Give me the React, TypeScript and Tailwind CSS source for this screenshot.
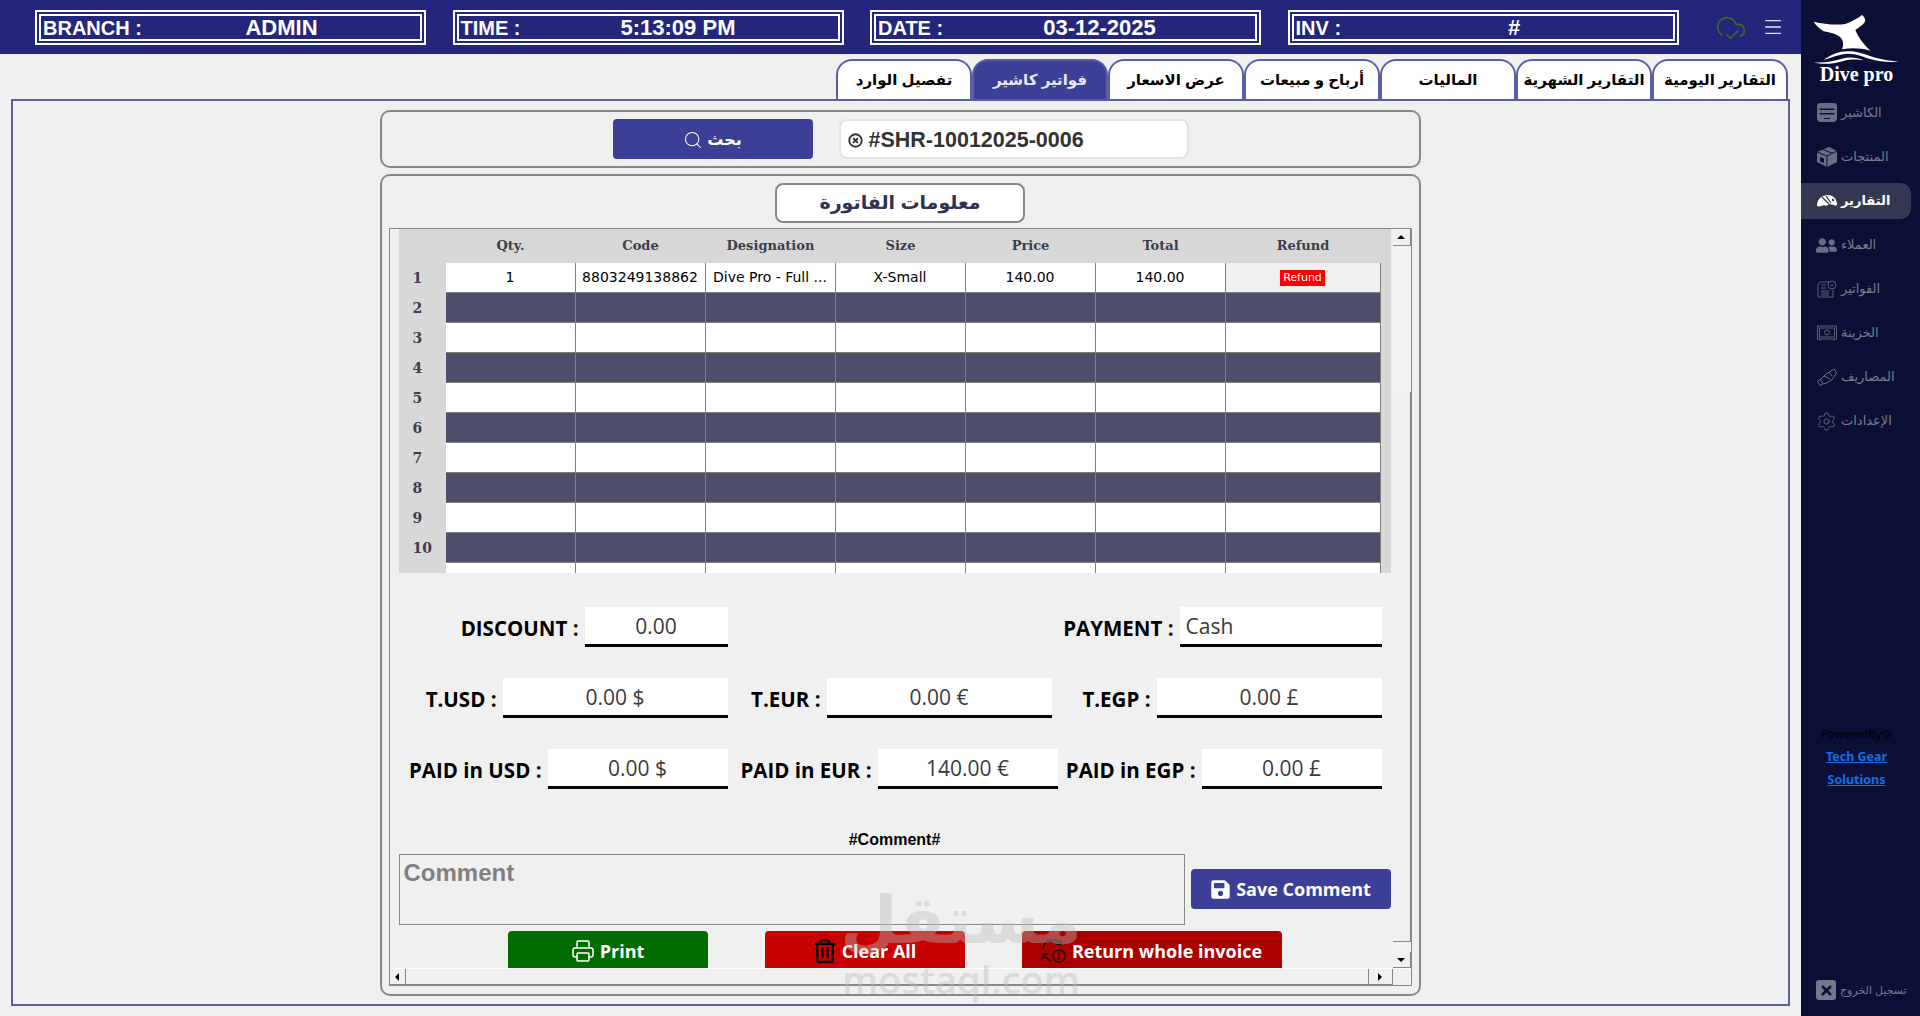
import { Search, Printer, Settings, CloudCheck, Menu, X, CircleX } from "lucide-react";
import { FaRegTrashAlt, FaSave, FaUserFriends } from "react-icons/fa";

const ar = "font-['Liberation_Sans','DejaVu_Sans',sans-serif]";

const tabs = ["تفصيل الوارد", "فواتير كاشير", "عرض الاسعار", "أرباح و مبيعات", "الماليات", "التقارير الشهرية", "التقارير اليومية"];
const columns = ["Qty.", "Code", "Designation", "Size", "Price", "Total", "Refund"];

const HeaderBox = ({ label, value, labelClass }: { label: string; value: string; labelClass: string }) => (
  <div className="flex h-[35px] w-[391px] items-center border-[6px] border-double border-white pt-[1px] pl-[2px] font-['Liberation_Sans',sans-serif] text-[20px] font-bold text-white">
    <span className={`whitespace-nowrap ${labelClass}`}>{label}</span>
    <span className="flex-1 text-center text-[22px]">{value}</span>
  </div>
);

// sidebar icons, drawn to match the app's own icon set
const CashierIcon = () => (
  <svg viewBox="0 0 20 20" className="h-5 w-5" fill="#6b6e82">
    <path fillRule="evenodd" d="M3 0h14a3 3 0 0 1 3 3v12a4 4 0 0 1-4 4H4a4 4 0 0 1-4-4V3a3 3 0 0 1 3-3zM2.5 5.5v1.5h15V5.5zM2.5 10v1.5h15V10zM7 15v1h6v-1z" />
  </svg>
);

const BoxIcon = () => (
  <svg viewBox="0 0 20 20" className="h-5 w-5">
    <path d="M0 5 12 0l8 4v11l-10 5-10-5z" fill="#6b6e82" />
    <path d="M0 5l10 4 10-5M10 9v11M6 2.5l10 4" stroke="#0c0f35" strokeWidth="1" fill="none" />
    <path d="M3 10l4 1.5V16l-4-1.5z" fill="#0c0f35" />
  </svg>
);

const GaugeIcon = () => (
  <svg viewBox="0 0 20 20" className="h-5 w-5">
    <path d="M0 15C0 8 5 4 11 4c5 0 9 4 9 9 0 2-2 2-3 1l-5-1c-2 2-4 2-5 1-2 1-5 2-7 1z" fill="#ffffff" />
    <path d="M5 6l7 7M9 5l5 7" stroke="#343851" strokeWidth="1.2" />
    <circle cx="16" cy="9" r="1.2" fill="#343851" />
  </svg>
);

const InvoiceIcon = () => (
  <svg viewBox="0 0 20 20" className="h-5 w-5" fill="none" stroke="#5d6075" strokeWidth="1">
    <path d="M3 3h9M3 3 1 5v13h15v-7" />
    <path d="M4 6h5M4 9h5M4 12h8M4 14h8M4 16h8" />
    <circle cx="15" cy="6" r="4" />
    <path d="M13.5 6l1.2 1.2 2-2.4" />
  </svg>
);

const SafeIcon = () => (
  <svg viewBox="0 0 20 20" className="h-5 w-5" fill="none" stroke="#5d6075" strokeWidth="1">
    <rect x="0.5" y="3" width="19" height="13" />
    <rect x="2.5" y="5" width="15" height="9" />
    <circle cx="10" cy="9.5" r="2.5" />
    <path d="M3 16v2M17 16v2" />
  </svg>
);

const MoneyHandIcon = () => (
  <svg viewBox="0 0 20 20" className="h-5 w-5" fill="none" stroke="#6b6e82" strokeWidth="1">
    <path d="M0.5 14l2.5 4.5 3-1.5-2.5-5z" />
    <path d="M4 12l4-4 9-6 2.5 4-5 7-5 3-3 1" />
    <path d="M7 9l6 3M12 5l3 4" />
  </svg>
);

const ReturnIcon = () => (
  <svg viewBox="0 0 26 26" className="h-[26px] w-[26px] shrink-0" fill="none" stroke="#111111" strokeWidth="1.5">
    <path d="M2 11A10 10 0 0 1 20 6M20 2v4.5h-4.5" />
    <path d="M10 22.5A10 10 0 0 1 3 15M2 21v-5h5" />
    <circle cx="18" cy="18" r="6" />
    <path d="M18 14.5v4M18 20v1.5" />
  </svg>
);

const LogoutIcon = () => (
  <span className="flex h-5 w-5 items-center justify-center rounded-[3px] bg-[#75778a]">
    <X size={15} strokeWidth={4} color="#0c0f35" />
  </span>
);

const navItems = [
  { title: "الكاشير", icon: <CashierIcon /> },
  { title: "المنتجات", icon: <BoxIcon /> },
  { title: "التقارير", icon: <GaugeIcon />, active: true },
  { title: "العملاء", icon: <FaUserFriends size={21} color="#6b6e82" /> },
  { title: "الفواتير", icon: <InvoiceIcon /> },
  { title: "الخزينة", icon: <SafeIcon /> },
  { title: "المصاريف", icon: <MoneyHandIcon /> },
  { title: "الإعدادات", icon: <Settings size={21} color="#6b6e82" strokeWidth={1} /> },
];

const Sidebar = () => (
  <aside className="flex w-[119px] shrink-0 flex-col bg-[#0c0f35]">
    <div className="flex h-[95px] flex-col items-center pt-[10px] pr-[8px]">
      <svg viewBox="0 0 300 180" className="h-[60px] w-[100px]" fill="#ffffff">
        <path d="M20 35C50 42 85 46 115 42C135 34 152 25 165 15C172 20 178 30 172 38C165 46 155 52 145 60C155 85 172 105 190 122C160 113 130 113 105 118C110 105 110 95 102 84C92 72 70 68 50 64C38 56 27 46 20 35z" />
        <path d="M50 150C75 132 100 122 130 124C160 126 180 136 205 143C228 149 252 152 275 155C245 158 215 155 190 147C165 139 145 130 122 131C98 133 75 141 50 150z" />
        <path d="M20 157C50 160 78 153 105 146C130 140 150 143 170 151C155 149 135 147 112 152C85 160 50 166 20 157z" />
      </svg>
      <span className="mt-[-7px] font-['Liberation_Serif',serif] text-[20px] leading-[22px] font-bold text-white">Dive pro</span>
    </div>
    <nav className="flex flex-col">
      {navItems.map((item) => (
        <div
          key={item.title}
          className={`mb-2 flex h-9 items-center gap-1 rounded-r-[10px] pl-[15px] ${ar} text-[13px] ${
            item.active ? "w-[110px] bg-[#343851] font-bold text-white" : "text-[#797b8c]"
          }`}
        >
          <span className="flex w-[21px] justify-center">{item.icon}</span>
          <span>{item.title}</span>
        </div>
      ))}
    </nav>
    <div className="mt-[275px] flex flex-col items-center pr-[8px] font-['Noto_Sans',sans-serif] text-[11.5px] leading-[23px]">
      <span className="text-black">PoweredBy@</span>
      <span className="text-[12.5px] font-bold text-[#0f6fe8] underline">Tech Gear</span>
      <span className="text-[12.5px] font-bold text-[#0f6fe8] underline">Solutions</span>
    </div>
    <div className={`mt-auto mb-[16px] flex items-center gap-1 pl-[15px] ${ar} text-[11px] text-[#797b8c]`}>
      <LogoutIcon />
      <span>تسجيل الخروج</span>
    </div>
  </aside>
);

const Field = ({ label, value, width, groupClass, left }: { label: string; value: string; width: string; groupClass: string; left?: boolean }) => (
  <div className={`flex items-center justify-end gap-[6px] ${groupClass}`}>
    <span className="pt-[3px] font-['Open_Sans',sans-serif] text-[20.5px] font-bold whitespace-nowrap text-black">{label}</span>
    <div className={`flex h-10 items-center border-b-[3px] border-black bg-white pt-[2px] font-['Open_Sans',sans-serif] text-[21px] text-[#3a3a3a] ${width} ${left ? "pl-[6px]" : "justify-center"}`}>
      {value}
    </div>
  </div>
);

const ActionButton = ({ icon, label, className }: { icon: React.ReactNode; label: string; className: string }) => (
  <button className={`flex h-10 items-center justify-center gap-[5px] rounded-[4px] font-['Open_Sans',sans-serif] text-[18px] font-bold text-white ${className}`}>
    {icon}
    {label}
  </button>
);

const GridRow = ({ n }: { n: number }) => {
  const dark = n % 2 === 0;
  const filled = n === 1;
  const values = filled ? ["1", "8803249138862", "Dive Pro - Full ...", "X-Small", "140.00", "140.00"] : ["", "", "", "", "", ""];
  return (
    <div className="grid h-[30px] grid-cols-[47px_130px_130px_130px_130px_130px_130px_155px] items-stretch">
      <div className="flex items-center pl-[14px] font-['DejaVu_Serif',serif] text-[14px] font-bold text-[#3d3d4d]">{n <= 10 ? n : ""}</div>
      {values.map((v, i) => (
        <div
          key={i}
          className={`flex items-center justify-center border-r border-b border-[#808080] font-['DejaVu_Sans',sans-serif] text-[14px] whitespace-nowrap text-black ${dark ? "bg-[#4d4e69]" : "bg-white"}`}
        >
          {v}
        </div>
      ))}
      <div className={`flex items-center justify-center border-r border-b border-[#808080] ${dark ? "bg-[#4d4e69]" : filled ? "bg-[#f0f0f0]" : "bg-white"}`}>
        {filled && <span className="bg-[#ff0000] px-[3px] font-['DejaVu_Sans',sans-serif] text-[11px] leading-4 text-white">Refund</span>}
      </div>
    </div>
  );
};

const InvoiceGrid = () => (
  <div className="relative h-[344px] w-[992px] overflow-hidden bg-[#d8d8d8]">
    <div className="grid h-[34px] grid-cols-[47px_130px_130px_130px_130px_130px_130px_155px] items-center text-center font-['DejaVu_Serif',serif] text-[13px] font-bold text-[#3d3d4d]">
      <span />
      {columns.map((c) => (
        <span key={c}>{c}</span>
      ))}
    </div>
    {Array.from({ length: 11 }, (_, i) => (
      <GridRow key={i} n={i + 1} />
    ))}
  </div>
);

const ScrollButton = ({ className, points }: { className: string; points: string }) => (
  <div className={`flex items-center justify-center border-r border-b border-[#888] bg-[#f0f0f0] ${className}`}>
    <svg viewBox="0 0 8 8" className="h-2 w-2" fill="#000000">
      <polygon points={points} />
    </svg>
  </div>
);

export default function App() {
  return (
    <div className="relative flex h-screen w-screen overflow-hidden bg-[#f0f0f0]">
      <div className="flex min-w-0 flex-1 flex-col">
        <header className="flex h-[54px] shrink-0 items-center bg-[#24267c] pl-[35px]">
          <div className="flex gap-[26.5px]">
            <HeaderBox label="BRANCH :" value="ADMIN" labelClass="w-[100px]" />
            <HeaderBox label="TIME :" value="5:13:09 PM" labelClass="w-[58px]" />
            <HeaderBox label="DATE :" value="03-12-2025" labelClass="w-[66px]" />
            <HeaderBox label="INV :" value="#" labelClass="w-[60px]" />
          </div>
          <CloudCheck size={32} color="#3f6b1e" strokeWidth={1.25} className="ml-[36px]" />
          <Menu size={22} color="#e4e4f0" strokeWidth={1.5} className="ml-[15px]" />
        </header>

        <div className="flex h-[45px] shrink-0 items-end justify-end pr-[13px]">
          {tabs.map((tab) => (
            <div
              key={tab}
              className={`flex h-10 w-[136px] items-center justify-center rounded-t-[16px] border-2 border-b-0 border-[#5b5ea6] ${ar} text-[15px] font-bold ${
                tab === "فواتير كاشير" ? "bg-[#3c3f96] text-[#e8e8f4]" : "bg-white text-black"
              }`}
            >
              {tab}
            </div>
          ))}
        </div>

        <main className="mx-[11px] flex h-[907px] flex-col items-center border-2 border-[#5b5ea6] pt-[9px]">
          <section className="flex h-[58px] w-[1041px] items-center justify-center gap-[26px] rounded-[10px] border-2 border-[#888]">
            <button className={`flex h-10 w-[200px] items-center justify-center gap-1 rounded-[4px] bg-[#3c3f96] pt-[1px] ${ar} text-[16px] font-bold text-white`}>
              <Search size={20} strokeWidth={1.25} />
              بحث
            </button>
            <div className="flex h-10 w-[350px] items-center gap-[6px] rounded-[8px] border-2 border-[#e4e4e4] bg-white pt-[2px] pl-[7px] font-['Liberation_Sans',sans-serif] text-[21.5px] font-bold text-[#333]">
              <CircleX size={15} strokeWidth={3} />
              #SHR-10012025-0006
            </div>
          </section>

          <section className="mt-[6px] flex h-[822px] w-[1041px] flex-col items-center rounded-[10px] border-2 border-[#888] pt-[7px] pr-[1px]">
            <div className={`flex h-10 w-[250px] shrink-0 items-center justify-center rounded-[8px] border-2 border-[#888] bg-white ${ar} text-[19px] font-bold text-[#2f3350]`}>
              معلومات الفاتورة
            </div>

            <div className="mt-[5px] flex h-[758px] w-[1023px] flex-col border border-[#888]">
              <div className="flex min-h-0 flex-1">
                <div className="relative w-[1003px] overflow-hidden pl-[9px]">
                  <InvoiceGrid />

                  <div className="mt-[34px] flex w-[983px] flex-col gap-[31px]">
                    <div className="flex justify-between">
                      <Field label="DISCOUNT :" value="0.00" width="w-[143px]" groupClass="w-[329px]" />
                      <Field label="PAYMENT :" value="Cash" width="w-[202px]" groupClass="w-[330px]" left />
                    </div>
                    <div className="flex">
                      <Field label="T.USD :" value="0.00 $" width="w-[225px]" groupClass="w-[329px]" />
                      <Field label="T.EUR :" value="0.00 €" width="w-[225px]" groupClass="w-[324px]" />
                      <Field label="T.EGP :" value="0.00 £" width="w-[225px]" groupClass="w-[330px]" />
                    </div>
                    <div className="flex">
                      <Field label="PAID in USD :" value="0.00 $" width="w-[180px]" groupClass="w-[329px]" />
                      <Field label="PAID in EUR :" value="140.00 €" width="w-[180px]" groupClass="w-[330px]" />
                      <Field label="PAID in EGP :" value="0.00 £" width="w-[180px]" groupClass="w-[324px]" />
                    </div>
                  </div>

                  <div className="mt-[41px] w-[992px] text-center font-['Liberation_Sans',sans-serif] text-[16px] leading-5 font-bold text-black">#Comment#</div>
                  <div className="mt-[4px] flex w-[992px] items-start gap-[6px]">
                    <div className="h-[71px] w-[786px] border border-[#888] pl-[4px] font-['Liberation_Sans',sans-serif] text-[24px] leading-[36px] font-bold text-[#808080]">Comment</div>
                    <ActionButton icon={<FaSave size={21} />} label="Save Comment" className="mt-[15px] w-[200px] bg-[#3c3f96]" />
                  </div>
                  <div className="mt-[6px] flex gap-[57px] pl-[109px]">
                    <ActionButton icon={<Printer size={24} strokeWidth={1.5} />} label="Print" className="w-[200px] bg-[#006c00]" />
                    <ActionButton icon={<FaRegTrashAlt size={24} color="#000000" />} label="Clear All" className="w-[200px] bg-[#c80000]" />
                    <ActionButton icon={<ReturnIcon />} label="Return whole invoice" className="w-[260px] bg-[#aa0000]" />
                  </div>
                </div>

                <div className="flex w-[18px] flex-col bg-[#f4f4f4] bg-[repeating-conic-gradient(#ececec_0_25%,#f8f8f8_0_50%)] bg-[length:2px_2px]">
                  <ScrollButton className="h-[17px]" points="4,2 8,6 0,6" />
                  <div className="mt-[146px] h-[550px] border-r border-b border-[#888] bg-[#f0f0f0]" />
                  <div className="mt-auto">
                    <ScrollButton className="h-[16px]" points="0,2 8,2 4,6" />
                  </div>
                </div>
              </div>
              <div className="flex h-[17px] shrink-0 border-t border-white bg-[#f0f0f0]">
                <ScrollButton className="w-[16px]" points="6,0 6,8 2,4" />
                <div className="flex-1 border-r border-b border-[#888]" />
                <ScrollButton className="w-[24px]" points="2,0 6,4 2,8" />
                <div className="w-[18px]" />
              </div>
            </div>
          </section>
        </main>
      </div>

      <Sidebar />

      {/* site watermark sits over everything in the screenshot */}
      <div className="pointer-events-none absolute top-[880px] left-[841px] flex w-[240px] flex-col items-center text-[#bcbcbc] opacity-40">
        <span className={`${ar} text-[66px] leading-[80px] font-bold`}>مستقل</span>
        <span className="font-['Open_Sans',sans-serif] text-[38px] leading-[38px] font-semibold">mostaql.com</span>
      </div>
    </div>
  );
}
